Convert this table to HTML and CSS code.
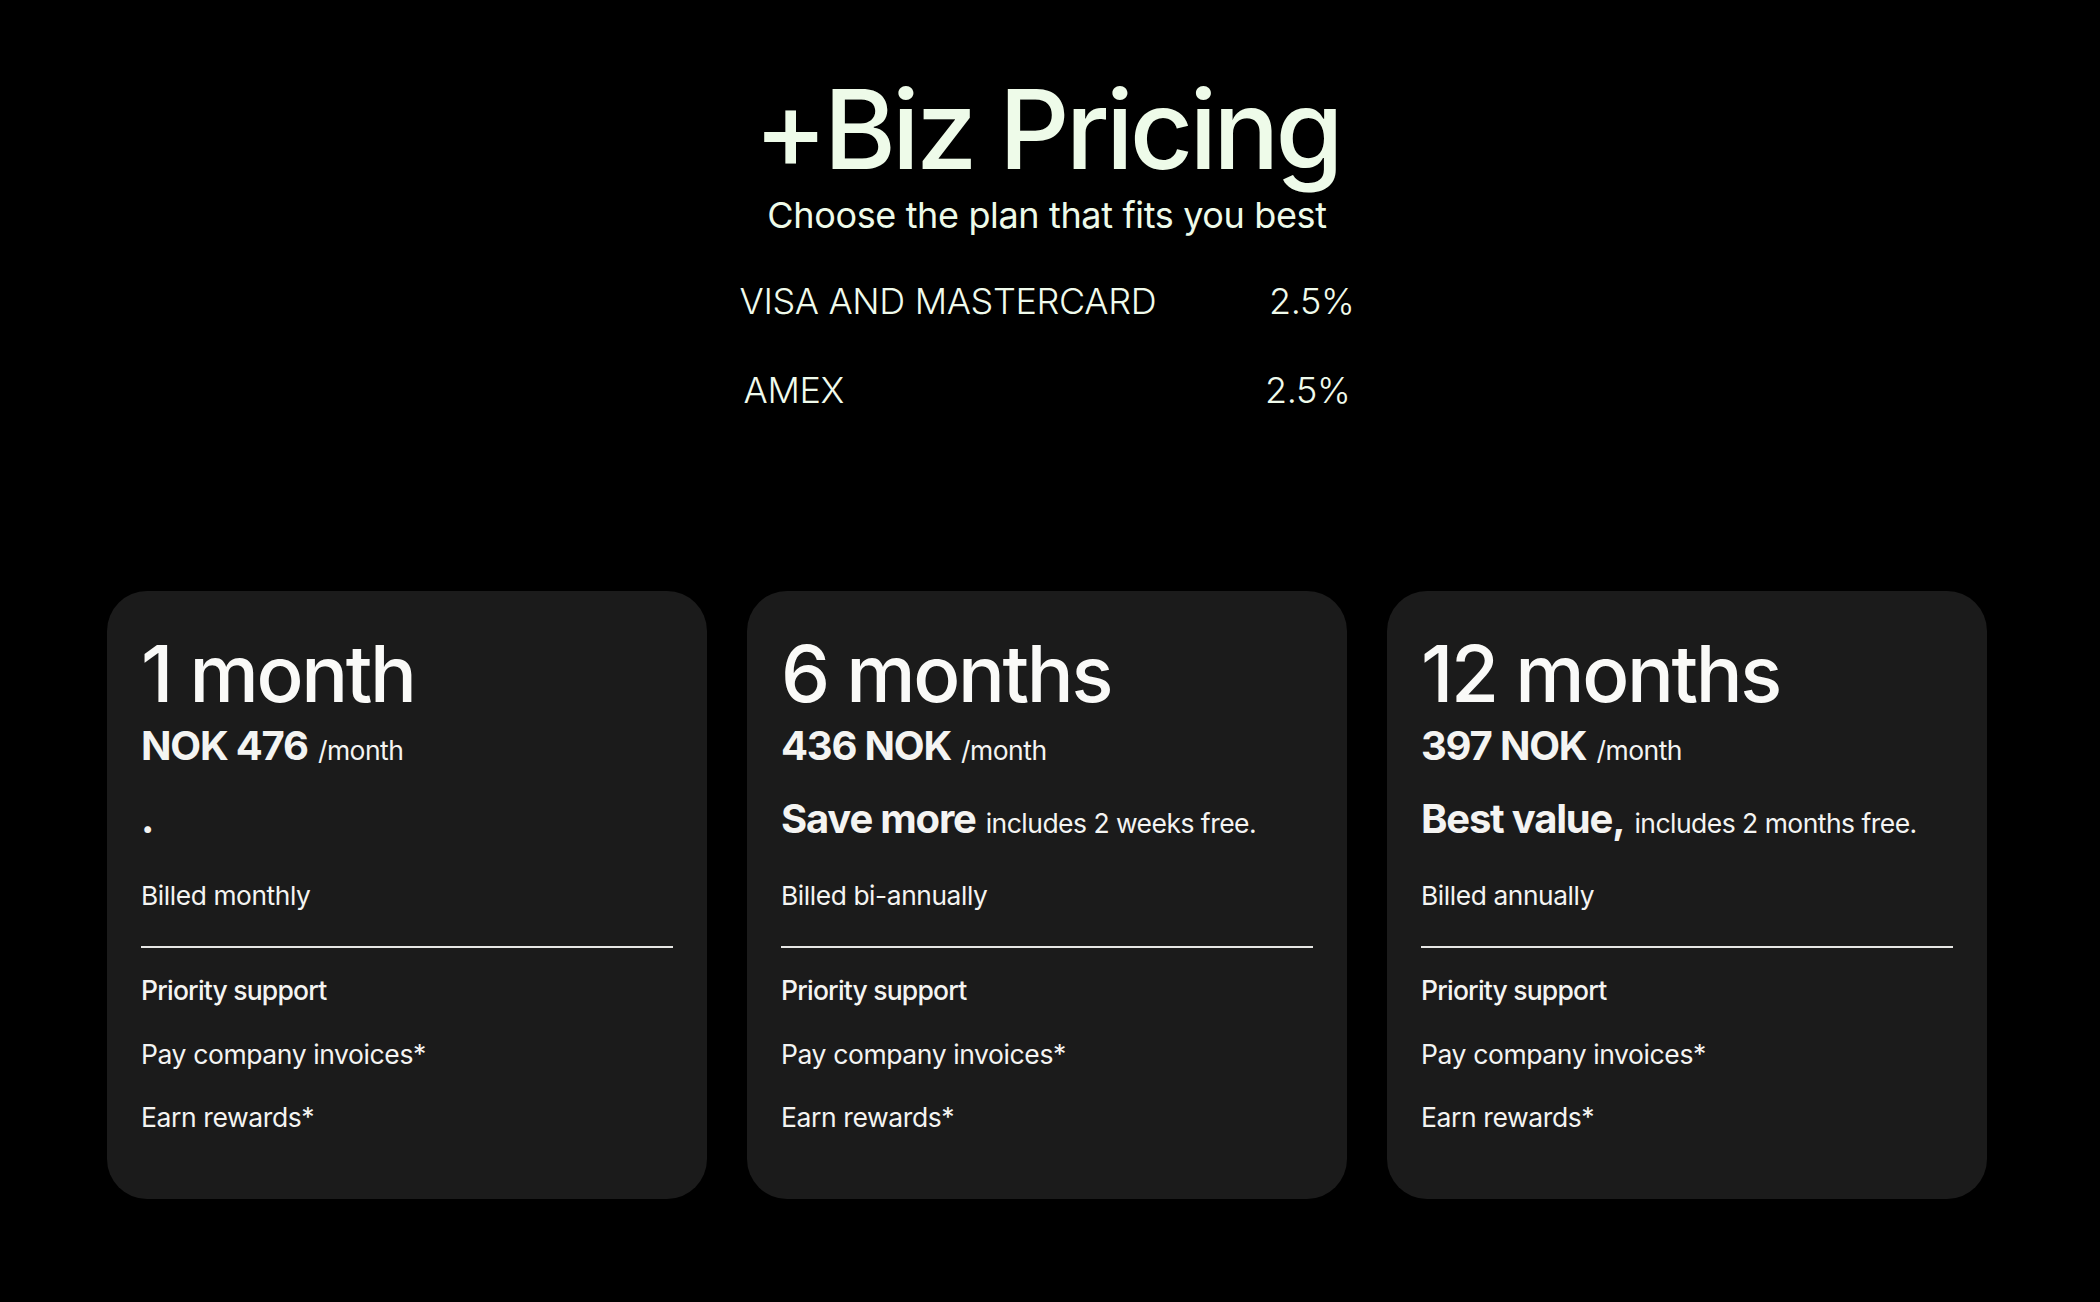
FILE: index.html
```html
<!DOCTYPE html>
<html lang="en">
<head>
<meta charset="utf-8">
<title>+Biz Pricing</title>
<link rel="stylesheet" href="styles.css">
</head>
<body>
<main class="page">
  <header class="hero">
    <h1 class="title">+Biz Pricing</h1>
    <p class="subtitle">Choose the plan that fits you best</p>
    <div class="rates">
      <div class="rate">
        <span class="rate-label">VISA AND MASTERCARD</span>
        <span class="rate-value">2.5%</span>
      </div>
      <div class="rate rate-inset">
        <span class="rate-label">AMEX</span>
        <span class="rate-value">2.5%</span>
      </div>
    </div>
  </header>

  <section class="plans">
    <article class="card">
      <h2 class="plan-name">1 month</h2>
      <p class="price"><strong>NOK 476</strong> <span class="per">/month</span></p>
      <p class="note"><strong>.</strong></p>
      <p class="billing">Billed monthly</p>
      <hr class="divider">
      <ul class="features">
        <li class="feature feature-strong">Priority support</li>
        <li class="feature">Pay company invoices*</li>
        <li class="feature">Earn rewards*</li>
      </ul>
    </article>

    <article class="card">
      <h2 class="plan-name">6 months</h2>
      <p class="price"><strong>436 NOK</strong> <span class="per">/month</span></p>
      <p class="note"><strong>Save more</strong> <span class="per">includes 2 weeks free.</span></p>
      <p class="billing">Billed bi-annually</p>
      <hr class="divider">
      <ul class="features">
        <li class="feature feature-strong">Priority support</li>
        <li class="feature">Pay company invoices*</li>
        <li class="feature">Earn rewards*</li>
      </ul>
    </article>

    <article class="card">
      <h2 class="plan-name">12 months</h2>
      <p class="price"><strong>397 NOK</strong> <span class="per">/month</span></p>
      <p class="note"><strong>Best value,</strong> <span class="per">includes 2 months free.</span></p>
      <p class="billing">Billed annually</p>
      <hr class="divider">
      <ul class="features">
        <li class="feature feature-strong">Priority support</li>
        <li class="feature">Pay company invoices*</li>
        <li class="feature">Earn rewards*</li>
      </ul>
    </article>
  </section>
</main>
</body>
</html>
```

FILE: styles.css
```css
* {
  box-sizing: border-box;
}

html, body {
  margin: 0;
  padding: 0;
  background: #000;
}

body {
  font-family: Inter, "Noto Sans", "Liberation Sans", sans-serif;
  color: #f4f4f2;
  min-height: 1302px;
}

.page {
  padding: 0 6px 0 0;
}

.hero {
  display: flex;
  flex-direction: column;
  align-items: center;
  padding-top: 74px;
}

.title {
  margin: 0;
  font-size: 110px;
  line-height: 1;
  font-weight: 500;
  letter-spacing: -0.035em;
  color: #eefbe9;
}

.subtitle {
  margin: 10px 0 0;
  font-size: 36px;
  line-height: 43px;
  font-weight: 400;
  letter-spacing: -0.01em;
  color: #eefbe9;
}

.rates {
  width: 615px;
  margin-top: 43px;
  display: flex;
  flex-direction: column;
  gap: 46px;
}

.rate {
  display: flex;
  justify-content: space-between;
  font-size: 36px;
  line-height: 43px;
  font-weight: 300;
  color: #f0fbec;
  letter-spacing: -0.01em;
}

.rate-inset {
  padding: 0 4px;
}

.plans {
  display: flex;
  justify-content: center;
  gap: 40px;
  margin-top: 179px;
}

.card {
  width: 600px;
  background: #1b1b1b;
  border-radius: 40px;
  padding: 44px 34px 64px;
}

.plan-name {
  margin: 0;
  font-size: 78px;
  line-height: 78px;
  font-weight: 500;
  letter-spacing: -0.03em;
  color: #fafaf8;
}

.price,
.note {
  margin: 9px 0 0;
  font-size: 40px;
  line-height: 48px;
  letter-spacing: -0.03em;
  color: #f4f4f2;
}

.note {
  margin-top: 25px;
}

.price strong,
.note strong {
  font-weight: 700;
}

.per {
  font-size: 26.5px;
  line-height: 1;
  font-weight: 400;
  letter-spacing: -0.02em;
}

.billing {
  margin: 35px 0 0;
  font-size: 26.3px;
  line-height: 36px;
  letter-spacing: -0.015em;
}

.divider {
  margin: 32px 0 0;
  border: 0;
  height: 2px;
  background: #e6e6e4;
}

.features {
  list-style: none;
  margin: 24px 0 0;
  padding: 0;
  display: flex;
  flex-direction: column;
  gap: 27.5px;
}

.feature {
  font-size: 26.5px;
  line-height: 36px;
  letter-spacing: -0.015em;
}

.feature-strong {
  font-weight: 500;
  letter-spacing: -0.03em;
}
```
